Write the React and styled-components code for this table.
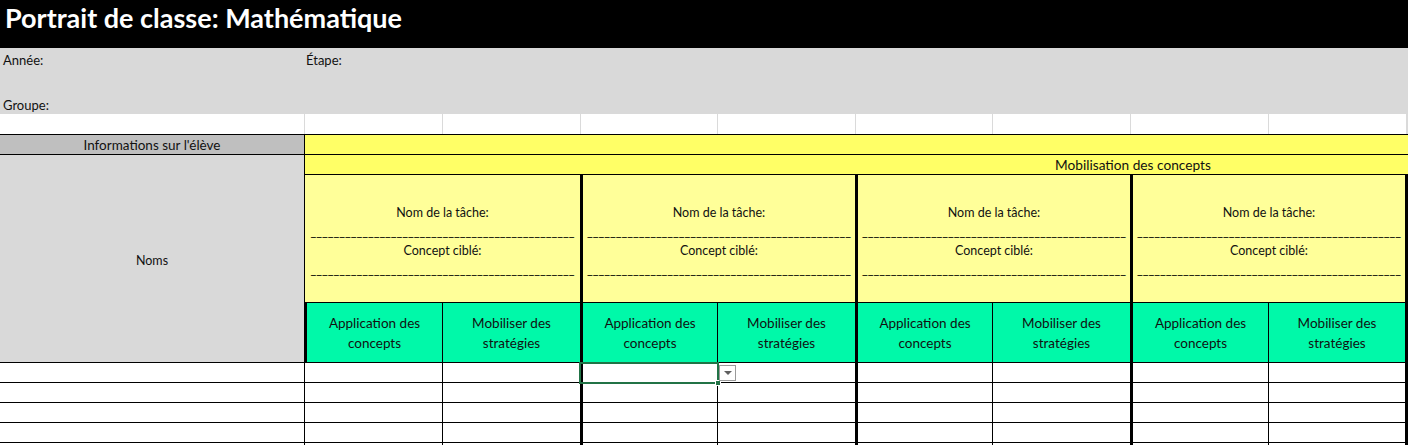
import React from "react";
import styled, { createGlobalStyle } from "styled-components";

const GlobalStyle = createGlobalStyle`
    body {
        margin: 0;
        background: #ffffff;
        font-family: Lato, "Liberation Sans", sans-serif;
        overflow: hidden;
    }
    * {
        box-sizing: border-box;
    }
`;

const COLS = "304px 138px 138px 137px 138px 137px 138px 138px 140px";

const Page = styled.div`
    width: 1408px;
    height: 445px;
    overflow: hidden;
`;

const TitleBar = styled.div`
    height: 48px;
    background: #000000;
    color: #ffffff;
    font-size: 27px;
    font-weight: 700;
    line-height: 35px;
    padding-left: 5px;
`;

const InfoBand = styled.div`
    height: 66px;
    background: #d9d9d9;
    display: grid;
    grid-template-columns: 304px 1fr;
    grid-template-rows: 24px 23px 19px;
    font-size: 13px;
    color: #111;
`;

const InfoLabel = styled.span`
    padding-left: ${(p) => (p.$inner ? "2px" : "3px")};
    display: flex;
    align-items: center;
    grid-row: ${(p) => p.$row};
`;

const Sheet = styled.div`
    display: grid;
    grid-template-columns: ${COLS};
    grid-template-rows: 20px 20px 20px 128px 60px repeat(5, 20px);
    font-size: 12.5px;
    color: #111;
`;

const GapCell = styled.div`
    background: #ffffff;
    border-left: ${(p) => (p.$first ? "none" : "1px solid #dadada")};
    border-right: ${(p) => (p.$last ? "2px solid #dadada" : "none")};
`;

const Cell = styled.div`
    border-top: 1px solid #000;
    border-left: ${(p) => (p.$thick ? "3px" : p.$none ? "0" : "1px")} solid #000;
    border-right: ${(p) => (p.$edge ? "3px solid #000" : "none")};
    display: flex;
    align-items: center;
    justify-content: center;
    text-align: center;
`;

const InfoHead = styled(Cell)`
    background: #bfbfbf;
    font-size: 13.5px;
`;

const NamesHead = styled(Cell)`
    grid-row: 3 / span 3;
    background: #d9d9d9;
    padding-top: 3px;
`;

const Band = styled(Cell)`
    grid-column: 2 / span 8;
    background: #ffff66;
    justify-content: flex-start;
    padding-left: 750px;
    font-size: 13.7px;
`;

const TaskCell = styled(Cell)`
    grid-column: span 2;
    background: #ffff99;
    flex-direction: column;
    line-height: 19px;
    padding: 4px 3px 0 3px;
`;

const Rule = styled.span`
    display: block;
    width: 100%;
    white-space: nowrap;
    overflow: hidden;
    text-align: center;
    color: #000;
`;

const SkillCell = styled(Cell)`
    background: #00f9a9;
    line-height: 20px;
    padding: 0 6px;
    font-size: 13.5px;
`;

const DataCell = styled(Cell)`
    background: #ffffff;
    position: relative;
`;

const Selection = styled.div`
    position: absolute;
    top: -1px;
    left: -4px;
    right: -2px;
    bottom: -2px;
    border: 2px solid #217346;
    z-index: 2;
`;

const Handle = styled.div`
    position: absolute;
    right: -4px;
    bottom: -4px;
    width: 6px;
    height: 6px;
    background: #217346;
    border: 1px solid #ffffff;
`;

const DropButton = styled.div`
    position: absolute;
    left: calc(100% + 2px);
    top: 1px;
    width: 17px;
    height: 16px;
    background: #ffffff;
    border: 1px solid #9a9a9a;
    display: flex;
    align-items: center;
    justify-content: center;
    z-index: 3;
    &::after {
        content: "";
        border-left: 4px solid transparent;
        border-right: 4px solid transparent;
        border-top: 4px solid #606060;
    }
`;

const skills = ["Application des concepts", "Mobiliser des stratégies"];
const groupStart = [4, 6, 8];
const rule = "_".repeat(46);

const Task = ({ index }) => (
    <TaskCell $thick={index > 0} $edge={index === 3}>
        <span>Nom de la tâche:</span>
        <Rule>{rule}</Rule>
        <span>Concept ciblé:</span>
        <Rule>{rule}</Rule>
    </TaskCell>
);

const App = () => {
    const columns = Array.from({ length: 8 }, (_, i) => i + 2);
    return (
        <Page>
            <GlobalStyle />
            <TitleBar>Portrait de classe: Mathématique</TitleBar>
            <InfoBand>
                <InfoLabel $row={1}>Année:</InfoLabel>
                <InfoLabel $row={1} $inner>Étape:</InfoLabel>
                <InfoLabel $row={3}>Groupe:</InfoLabel>
            </InfoBand>
            <Sheet>
                <GapCell $first />
                {columns.map((c) => (
                    <GapCell key={c} $last={c === 9} />
                ))}

                <InfoHead $none>Informations sur l'élève</InfoHead>
                <Band />

                <NamesHead $none>Noms</NamesHead>
                <Band>Mobilisation des concepts</Band>

                {[0, 1, 2, 3].map((i) => (
                    <Task key={i} index={i} />
                ))}

                {columns.map((c, i) => (
                    <SkillCell key={c} $thick={i % 2 === 0} $edge={c === 9}>
                        {skills[i % 2]}
                    </SkillCell>
                ))}

                {[0, 1, 2, 3, 4].map((r) => (
                    <React.Fragment key={r}>
                        <DataCell $none />
                        {columns.map((c) => (
                            <DataCell
                                key={c}
                                $thick={groupStart.includes(c)}
                                $edge={c === 9}
                            >
                                {r === 0 && c === 4 && (
                                    <Selection>
                                        <Handle />
                                        <DropButton />
                                    </Selection>
                                )}
                            </DataCell>
                        ))}
                    </React.Fragment>
                ))}
            </Sheet>
        </Page>
    );
};

export default App;
